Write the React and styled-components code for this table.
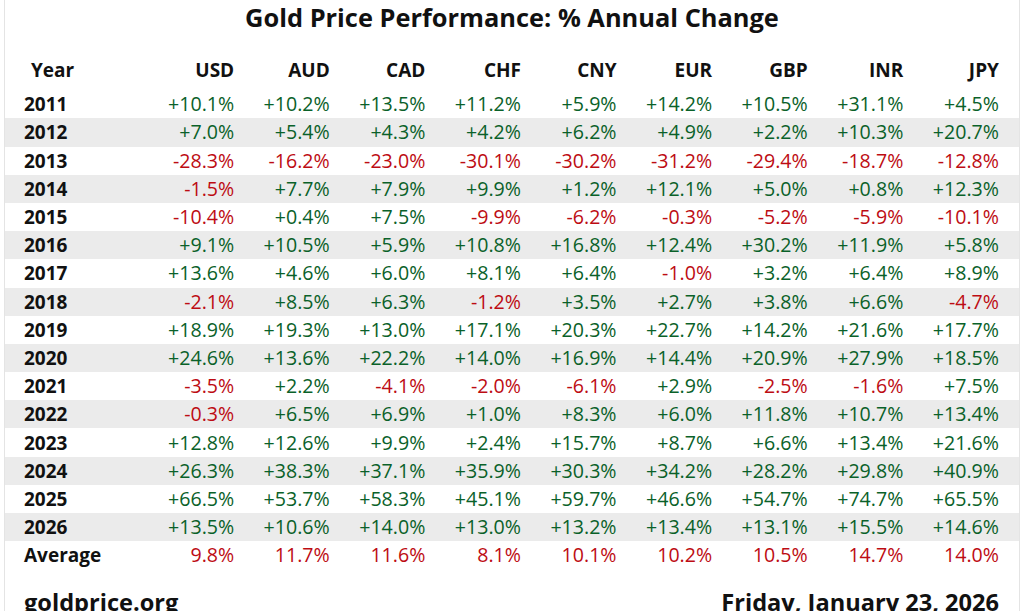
import React from 'react';
import styled, { createGlobalStyle } from 'styled-components';

const GlobalStyle = createGlobalStyle`
  html, body {
    margin: 0;
    padding: 0;
    background: #fff;
  }

  body {
    font-family: 'Open Sans', 'Liberation Sans', sans-serif;
    color: #111;
    overflow: hidden;
  }
`;

const currencies = ['USD', 'AUD', 'CAD', 'CHF', 'CNY', 'EUR', 'GBP', 'INR', 'JPY'];

const rows = [
  ['2011', '+10.1', '+10.2', '+13.5', '+11.2', '+5.9', '+14.2', '+10.5', '+31.1', '+4.5'],
  ['2012', '+7.0', '+5.4', '+4.3', '+4.2', '+6.2', '+4.9', '+2.2', '+10.3', '+20.7'],
  ['2013', '-28.3', '-16.2', '-23.0', '-30.1', '-30.2', '-31.2', '-29.4', '-18.7', '-12.8'],
  ['2014', '-1.5', '+7.7', '+7.9', '+9.9', '+1.2', '+12.1', '+5.0', '+0.8', '+12.3'],
  ['2015', '-10.4', '+0.4', '+7.5', '-9.9', '-6.2', '-0.3', '-5.2', '-5.9', '-10.1'],
  ['2016', '+9.1', '+10.5', '+5.9', '+10.8', '+16.8', '+12.4', '+30.2', '+11.9', '+5.8'],
  ['2017', '+13.6', '+4.6', '+6.0', '+8.1', '+6.4', '-1.0', '+3.2', '+6.4', '+8.9'],
  ['2018', '-2.1', '+8.5', '+6.3', '-1.2', '+3.5', '+2.7', '+3.8', '+6.6', '-4.7'],
  ['2019', '+18.9', '+19.3', '+13.0', '+17.1', '+20.3', '+22.7', '+14.2', '+21.6', '+17.7'],
  ['2020', '+24.6', '+13.6', '+22.2', '+14.0', '+16.9', '+14.4', '+20.9', '+27.9', '+18.5'],
  ['2021', '-3.5', '+2.2', '-4.1', '-2.0', '-6.1', '+2.9', '-2.5', '-1.6', '+7.5'],
  ['2022', '-0.3', '+6.5', '+6.9', '+1.0', '+8.3', '+6.0', '+11.8', '+10.7', '+13.4'],
  ['2023', '+12.8', '+12.6', '+9.9', '+2.4', '+15.7', '+8.7', '+6.6', '+13.4', '+21.6'],
  ['2024', '+26.3', '+38.3', '+37.1', '+35.9', '+30.3', '+34.2', '+28.2', '+29.8', '+40.9'],
  ['2025', '+66.5', '+53.7', '+58.3', '+45.1', '+59.7', '+46.6', '+54.7', '+74.7', '+65.5'],
  ['2026', '+13.5', '+10.6', '+14.0', '+13.0', '+13.2', '+13.4', '+13.1', '+15.5', '+14.6'],
];

const averages = ['9.8', '11.7', '11.6', '8.1', '10.1', '10.2', '10.5', '14.7', '14.0'];

const Wrapper = styled.div`
  box-sizing: border-box;
  width: 1016px;
  height: 611px;
  margin-left: 4px;
  border-left: 1px solid #e4e4e4;
  border-right: 1px solid #e4e4e4;
  overflow: hidden;
`;

const Title = styled.h1`
  margin: 0;
  font-size: 25.4px;
  line-height: 34px;
  font-weight: 700;
  text-align: center;
  color: #111;
`;

const Table = styled.div`
  display: flex;
  flex-direction: column;
  margin-top: 22px;
`;

const Row = styled.div`
  display: grid;
  grid-template-columns: 114.6px repeat(9, 95.6px);
  align-items: center;
  height: 28.2px;
  padding: 0 20px 0 19px;
  background: ${({ $striped }) => ($striped ? '#ebebeb' : 'transparent')};
`;

const HeaderRow = styled(Row)`
  margin-bottom: 6px;
`;

const Cell = styled.div`
  font-size: ${({ $bold }) => ($bold ? '19px' : '19.6px')};
  line-height: 28px;
  text-align: right;
  white-space: nowrap;
  font-weight: ${({ $bold }) => ($bold ? 700 : 400)};
  color: ${({ $tone }) =>
    $tone === 'up' ? '#0a6129' : $tone === 'down' ? '#bd0c13' : '#111'};
`;

const YearCell = styled(Cell)`
  text-align: left;
  padding-left: ${({ $indent }) => ($indent ? '7px' : '0')};
`;

const Footer = styled.div`
  display: flex;
  justify-content: space-between;
  align-items: baseline;
  padding: 0 20px 0 19px;
  margin-top: 17px;
  font-size: 23.6px;
  line-height: 32px;
  font-weight: 700;
  color: #111;
`;

const toneOf = value => (value.startsWith('-') ? 'down' : 'up');

const App = () => (
  <>
    <GlobalStyle />
    <Wrapper>
      <Title>Gold Price Performance: % Annual Change</Title>
      <Table>
        <HeaderRow>
          <YearCell $bold $indent>Year</YearCell>
          {currencies.map(c => (
            <Cell key={c} $bold>{c}</Cell>
          ))}
        </HeaderRow>
        {rows.map(([year, ...values], i) => (
          <Row key={year} $striped={i % 2 === 1}>
            <YearCell $bold>{year}</YearCell>
            {values.map((v, j) => (
              <Cell key={currencies[j]} $tone={toneOf(v)}>{v}%</Cell>
            ))}
          </Row>
        ))}
        <Row>
          <YearCell $bold>Average</YearCell>
          {averages.map((v, j) => (
            <Cell key={currencies[j]} $tone="down">{v}%</Cell>
          ))}
        </Row>
      </Table>
      <Footer>
        <span>goldprice.org</span>
        <span>Friday, January 23, 2026</span>
      </Footer>
    </Wrapper>
  </>
);

export default App;
